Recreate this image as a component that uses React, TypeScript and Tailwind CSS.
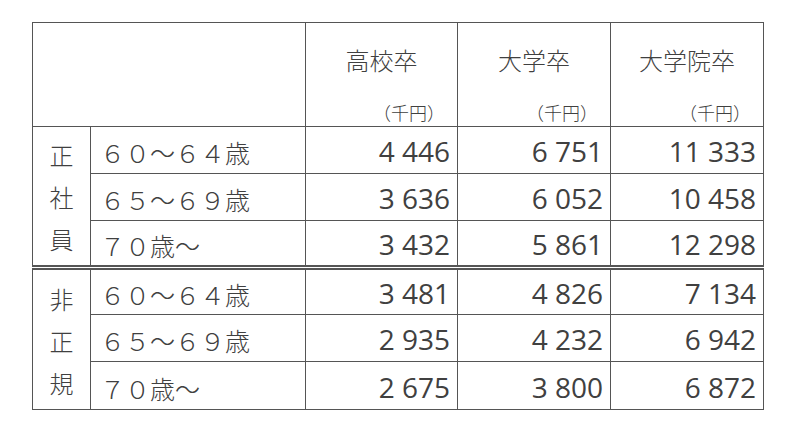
const font = "font-['Noto_Sans_CJK_JP','Noto_Sans',sans-serif]";

const groups = [
  {
    label: ["正", "社", "員"],
    rows: [
      { age: "６０～６４歳", v: ["4 446", "6 751", "11 333"], h: "h-[47px]" },
      { age: "６５～６９歳", v: ["3 636", "6 052", "10 458"], h: "h-[47px]" },
      { age: "７０歳～", v: ["3 432", "5 861", "12 298"], h: "h-[46px]" },
    ],
  },
  {
    label: ["非", "正", "規"],
    rows: [
      { age: "６０～６４歳", v: ["3 481", "4 826", "7 134"], h: "h-[46px]" },
      { age: "６５～６９歳", v: ["2 935", "4 232", "6 942"], h: "h-[47px]" },
      { age: "７０歳～", v: ["2 675", "3 800", "6 872"], h: "h-[48px]" },
    ],
  },
];

const heads = ["高校卒", "大学卒", "大学院卒"];

export default function App() {
  return (
    <div className={`w-[800px] h-[426px] bg-white pt-[22px] pl-[32px] text-[#404040] font-light ${font}`}>
      <table className="border-collapse border border-[#555] table-fixed">
        <colgroup>
          <col className="w-[58px]" />
          <col className="w-[215px]" />
          <col className="w-[152px]" />
          <col className="w-[153px]" />
          <col className="w-[153px]" />
        </colgroup>
        <thead>
          <tr className="h-[104px]">
            <th colSpan={2} className="border border-[#555]" />
            {heads.map((h) => (
              <th key={h} className="border border-[#555] p-0 align-top font-light">
                <div className="pt-[22px] text-center text-[24px] leading-[30px]">{h}</div>
                <div className="pt-[26px] pr-[12px] text-right text-[18px] leading-[22px]">（千円）</div>
              </th>
            ))}
          </tr>
        </thead>
        <tbody>
          {groups.map((g, gi) =>
            g.rows.map((r, ri) => (
              <tr
                key={`${gi}-${ri}`}
                className={`${r.h} ${gi === 0 && ri === 2 ? "border-b-[5px] border-double border-[#555]" : ""}`}
              >
                {ri === 0 && (
                  <td rowSpan={3} className="border border-[#555] p-0 text-center align-middle">
                    <div className="flex flex-col items-center text-[24px] leading-[42px] pt-[2px]">
                      {g.label.map((c, i) => (
                        <span key={i}>{c}</span>
                      ))}
                    </div>
                  </td>
                )}
                <td className="border border-[#555] pl-[9px] pt-[4px] text-[25px] leading-[40px] whitespace-nowrap">
                  {r.age}
                </td>
                {r.v.map((n, i) => (
                  <td key={i} className="border border-[#555] pr-[7px] pt-[2px] text-right text-[28px] leading-[40px] font-normal font-['Open_Sans',sans-serif]">
                    {n}
                  </td>
                ))}
              </tr>
            ))
          )}
        </tbody>
      </table>
    </div>
  );
}
